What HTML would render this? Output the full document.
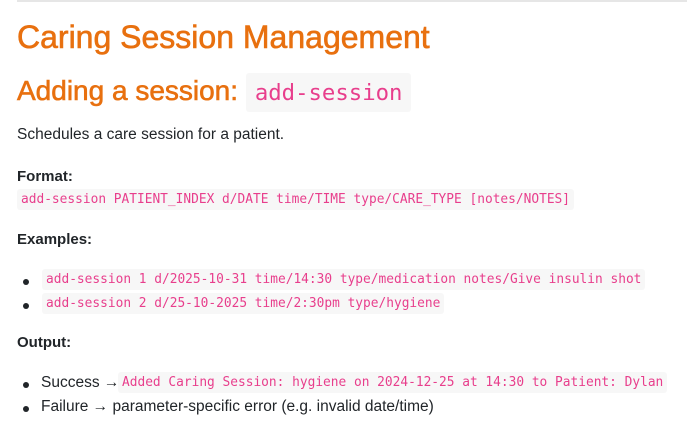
<!DOCTYPE html>
<html><head><meta charset="utf-8"><style>
body{margin:0;width:687px;height:429px;background:#fff;position:relative;overflow:hidden;font-family:"Liberation Sans",sans-serif;color:#212529}
.a{position:absolute;white-space:nowrap}
.hr{position:absolute;left:17px;right:0;top:0;height:2px;background:#e6e6e6}
h1,h2{margin:0;font-weight:normal;color:#e8700f;-webkit-text-stroke:0.6px #e8700f}
code{font-family:"DejaVu Sans Mono","Liberation Mono",monospace;color:#e83e8c;background:#f7f7f7;border-radius:3px;-webkit-text-stroke:0}
.c{font-size:12.85px;padding:3px 4px}
.b{font-weight:bold;font-size:15px}
.dot{position:absolute;width:6px;height:6px;border-radius:50%;background:#212529}
.t{font-size:15.5px}
</style></head><body>
<div class="hr"></div>
<h1 class="a" style="left:17px;top:19px;font-size:32px">Caring Session Management</h1>
<h2 class="a" style="left:17px;top:72px;font-size:28px;line-height:38px">Adding a session: <code style="font-size:22.3px;padding:7px 9px 6px">add-session</code></h2>
<div class="a t" style="left:17px;top:126px">Schedules a care session for a patient.</div>
<div class="a b" style="left:17px;top:168px">Format:</div>
<div class="a" style="left:17px;top:190px"><code class="c">add-session PATIENT_INDEX d/DATE time/TIME type/CARE_TYPE [notes/NOTES]</code></div>
<div class="a b" style="left:17px;top:231px">Examples:</div>
<div class="dot" style="left:23px;top:279px"></div>
<div class="a" style="left:42px;top:270px"><code class="c">add-session 1 d/2025-10-31 time/14:30 type/medication notes/Give insulin shot</code></div>
<div class="dot" style="left:23px;top:303px"></div>
<div class="a" style="left:42px;top:294px"><code class="c">add-session 2 d/25-10-2025 time/2:30pm type/hygiene</code></div>
<div class="a b" style="left:17px;top:334px">Output:</div>
<div class="dot" style="left:23px;top:382px"></div>
<div class="a t" style="left:41px;top:374px">Success →</div>
<div class="a" style="left:118px;top:373px"><code class="c">Added Caring Session: hygiene on 2024-12-25 at 14:30 to Patient: Dylan</code></div>
<div class="dot" style="left:23px;top:406px"></div>
<div class="a t" style="left:41px;top:398px">Failure → parameter-specific error (e.g. invalid date/time)</div>
</body></html>
